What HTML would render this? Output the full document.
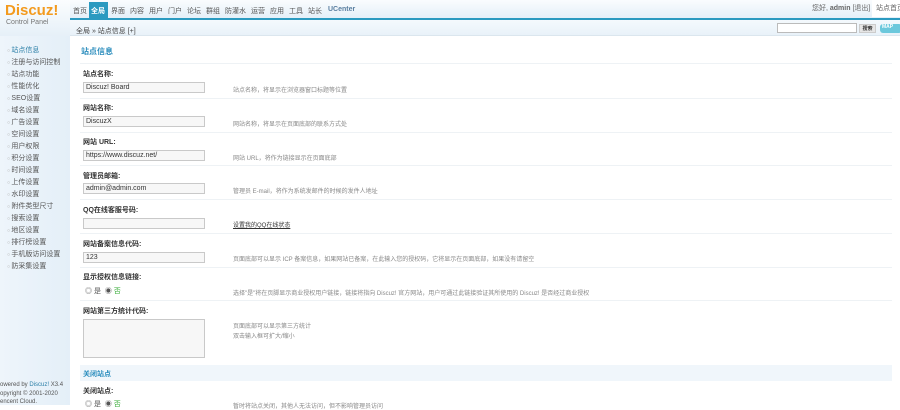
<!DOCTYPE html>
<html><head><meta charset="utf-8"><style>
*{margin:0;padding:0;box-sizing:border-box}
body{width:900px;height:405px;overflow:hidden;background:#fff;font-family:"Liberation Sans","Noto Sans CJK SC",sans-serif;font-size:7px;color:#333;position:relative;white-space:nowrap}
.a{position:absolute}
#top{left:0;top:0;width:900px;height:19px;background:linear-gradient(#fafcfe,#e3eff8)}
#bl{left:70px;top:18px;width:830px;height:2px;background:#2b9ac0}
#side{left:0;top:20px;width:70px;height:385px;background:linear-gradient(90deg,#eef5fb,#e4eff8)}
#side2{left:0;top:0;width:70px;height:36px;background:linear-gradient(#fbfdfe,#e6f0f8)}
.logo{left:5px;top:2px;font-size:15px;font-weight:bold;color:#f39a1e;letter-spacing:0}
.cp{left:6px;top:19px;font-size:7px;color:#777}
.nav span{position:absolute;top:6px;color:#555}
.cur{left:89px;top:2px;width:19px;height:17px;background:#2b9ac0;color:#fff;font-weight:bold;padding:4px 0 0 2px}
#crumb{left:70px;top:20px;width:830px;height:16px;background:linear-gradient(#f4f9fd,#e9f2f9);border-bottom:1px solid #dbe6ee}
.si{position:absolute;left:7px;color:#555}
.si:before{content:"○ ";color:#aaa;font-size:5px}
.lab{position:absolute;left:83px;font-weight:bold;color:#333}
.inp{position:absolute;left:83px;width:122px;height:11px;border:1px solid #c9c9c9;background:#f7f7f7;padding:1px 2px;font-size:7px;color:#333}
.tip{position:absolute;left:233px;color:#888;font-size:6px}
.hl{position:absolute;left:80px;width:812px;height:1px;background:#eef2f5}
</style></head><body>
<div id="top" class="a"></div>
<div id="side" class="a"></div>
<div id="side2" class="a"></div>
<div class="a logo">Discuz!</div>
<div class="a cp">Control Panel</div>
<div class="nav">
<span style="left:73px">首页</span>
<span style="left:111px">界面</span><span style="left:130px">内容</span><span style="left:149px">用户</span><span style="left:168px">门户</span><span style="left:187px">论坛</span><span style="left:206px">群组</span><span style="left:225px">防灌水</span><span style="left:251px">运营</span><span style="left:270px">应用</span><span style="left:289px">工具</span><span style="left:308px">站长</span><span style="left:328px;font-weight:bold;color:#5a7fa0">UCenter</span>
</div>
<div class="a cur">全局</div>
<div id="bl" class="a"></div>
<div class="a" style="left:812px;top:3px;color:#666">您好, <b>admin</b> [退出]</div>
<div class="a" style="left:872px;top:0;width:28px;height:17px;background:#fff;padding:3px 0 0 4px;color:#666;overflow:hidden">站点首页</div>
<div id="crumb" class="a"></div>
<div class="a" style="left:76px;top:26px;color:#444">全局 » 站点信息 [+]</div>
<div class="a" style="left:777px;top:23px;width:80px;height:10px;border:1px solid #bbb;background:#fff"></div>
<div class="a" style="left:859px;top:24px;width:17px;height:9px;background:#e6e6e6;border:1px solid #ccc;font-size:5px;text-align:center;font-weight:bold">搜索</div>
<div class="a" style="left:880px;top:24px;width:22px;height:9px;background:#6cc8dc;border-radius:3px;color:#fff;font-size:5px;padding-left:2px;font-weight:bold">MAP</div>
<div class="si" style="top:45px;color:#2b7fa7">站点信息</div>
<div class="si" style="top:57px">注册与访问控制</div>
<div class="si" style="top:69px">站点功能</div>
<div class="si" style="top:81px">性能优化</div>
<div class="si" style="top:93px">SEO设置</div>
<div class="si" style="top:105px">域名设置</div>
<div class="si" style="top:117px">广告设置</div>
<div class="si" style="top:129px">空间设置</div>
<div class="si" style="top:141px">用户权限</div>
<div class="si" style="top:153px">积分设置</div>
<div class="si" style="top:165px">时间设置</div>
<div class="si" style="top:177px">上传设置</div>
<div class="si" style="top:189px">水印设置</div>
<div class="si" style="top:201px">附件类型尺寸</div>
<div class="si" style="top:213px">搜索设置</div>
<div class="si" style="top:225px">地区设置</div>
<div class="si" style="top:237px">排行榜设置</div>
<div class="si" style="top:249px">手机版访问设置</div>
<div class="si" style="top:261px">防采集设置</div>
<div class="a" style="left:0;top:381px;font-size:6px;color:#555;line-height:8.5px;white-space:nowrap">owered by <span style="color:#2b7fa7">Discuz!</span> X3.4<br>opyright © 2001-2020<br>encent Cloud.</div>
<div class="a" style="left:81px;top:46px;font-weight:bold;color:#2b8dbd;font-size:8px">站点信息</div>
<div class="hl" style="top:63px"></div>
<div class="lab" style="top:69px">站点名称:</div>
<div class="inp" style="top:82px">Discuz! Board</div>
<div class="tip" style="top:85px">站点名称，将显示在浏览器窗口标题等位置</div>
<div class="hl" style="top:98px"></div>
<div class="lab" style="top:103px">网站名称:</div>
<div class="inp" style="top:116px">DiscuzX</div>
<div class="tip" style="top:119px">网站名称，将显示在页面底部的联系方式处</div>
<div class="hl" style="top:132px"></div>
<div class="lab" style="top:137px">网站 URL:</div>
<div class="inp" style="top:150px">https://www.discuz.net/</div>
<div class="tip" style="top:153px">网站 URL，将作为链接显示在页面底部</div>
<div class="hl" style="top:165px"></div>
<div class="lab" style="top:171px">管理员邮箱:</div>
<div class="inp" style="top:183px">admin@admin.com</div>
<div class="tip" style="top:186px">管理员 E-mail，将作为系统发邮件的时候的发件人地址</div>
<div class="hl" style="top:199px"></div>
<div class="lab" style="top:205px">QQ在线客服号码:</div>
<div class="inp" style="top:218px"></div>
<div class="tip" style="top:220px;color:#333;text-decoration:underline">设置我的QQ在线状态</div>
<div class="hl" style="top:233px"></div>
<div class="lab" style="top:239px">网站备案信息代码:</div>
<div class="inp" style="top:252px">123</div>
<div class="tip" style="top:254px">页面底部可以显示 ICP 备案信息，如果网站已备案，在此输入您的授权码，它将显示在页面底部，如果没有请留空</div>
<div class="hl" style="top:267px"></div>
<div class="lab" style="top:272px">显示授权信息链接:</div>
<div class="a" style="left:85px;top:286px;color:#555">◎ 是 &nbsp;◉ <span style="color:#3a3">否</span></div>
<div class="tip" style="top:288px">选择"是"将在页脚显示商业授权用户链接，链接将指向 Discuz! 官方网站，用户可通过此链接验证其所使用的 Discuz! 是否经过商业授权</div>
<div class="hl" style="top:300px"></div>
<div class="lab" style="top:306px">网站第三方统计代码:</div>
<div class="inp" style="top:319px;height:39px"></div>
<div class="tip" style="top:322px;line-height:10px">页面底部可以显示第三方统计<br>双击输入框可扩大/缩小</div>
<div class="a" style="left:80px;top:365px;width:812px;height:16px;background:#f0f6fb"></div>
<div class="a" style="left:83px;top:369px;color:#2b8dbd;font-weight:bold">关闭站点</div>
<div class="lab" style="top:386px">关闭站点:</div>
<div class="a" style="left:85px;top:399px;color:#555">◎ 是 &nbsp;◉ <span style="color:#3a3">否</span></div>
<div class="tip" style="top:401px">暂时将站点关闭，其他人无法访问，但不影响管理员访问</div>
</body></html>
